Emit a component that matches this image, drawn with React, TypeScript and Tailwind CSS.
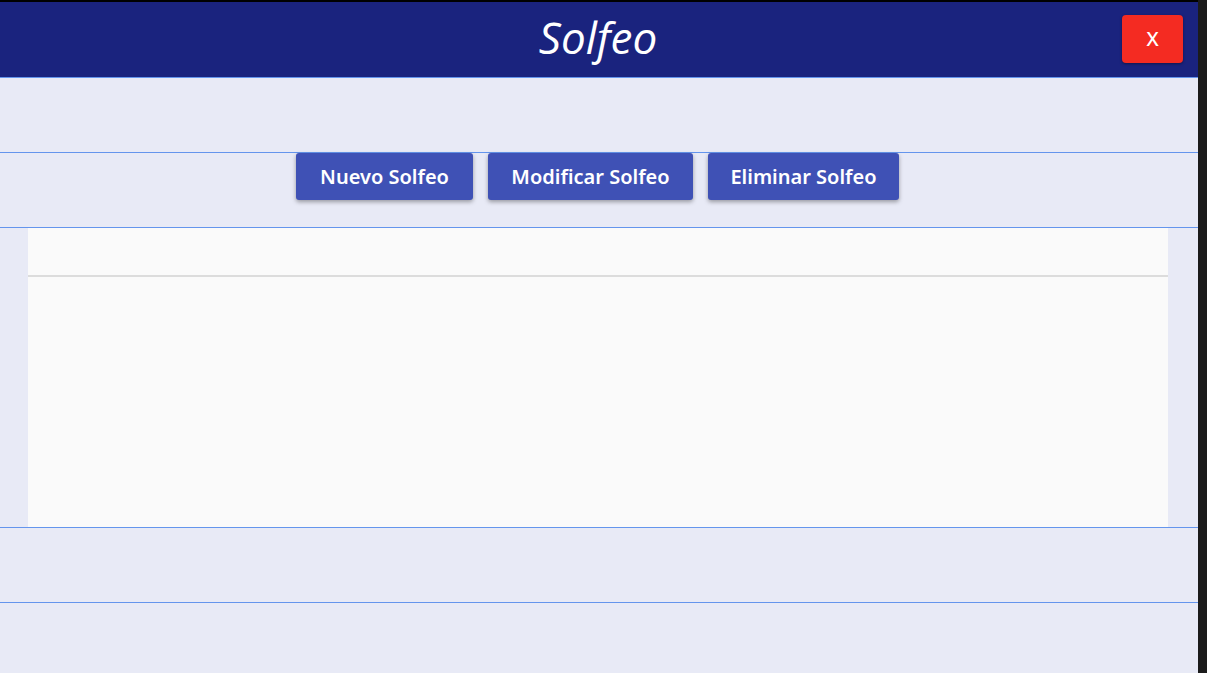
import React from "react";

export default function App() {
  const btn =
    "h-[47px] rounded-[3px] bg-[#3f51b5] text-white text-[20px] font-semibold shadow-[0_2px_4px_rgba(0,0,0,0.35)] flex items-center justify-center";
  return (
    <div
      className="flex w-[1207px] h-[673px] overflow-hidden bg-[#1b1b1b]"
      style={{ fontFamily: '"Noto Sans", "Open Sans", sans-serif' }}
    >
      <div className="flex flex-col w-[1198px] h-full bg-[#e8eaf6] border-t-2 border-black">
        <div className="h-[75px] bg-[#1a237e] relative flex items-center justify-center shrink-0">
          <span className="text-white italic text-[44px] leading-none pb-[6px] pr-[2px]" style={{ fontFamily: '"Open Sans", sans-serif' }}>
            Solfeo
          </span>
          <button className="absolute right-[15px] top-[13px] w-[61px] h-[48px] rounded-[4px] bg-[#f42b22] text-white text-[20px] font-medium shadow-[0_1px_3px_rgba(0,0,0,0.4)] flex items-center justify-center">
            X
          </button>
        </div>
        <div className="h-[75px] border-t border-[#6495ed] shrink-0" />
        <div className="h-[75px] border-t border-[#6495ed] shrink-0 flex justify-center items-start gap-[15px] pr-[3px]">
          <button className={`${btn} w-[177px]`}>Nuevo Solfeo</button>
          <button className={`${btn} w-[205px]`}>Modificar Solfeo</button>
          <button className={`${btn} w-[191px]`}>Eliminar Solfeo</button>
        </div>
        <div className="h-[300px] border-t border-[#6495ed] shrink-0 px-[28px] pr-[30px] flex">
          <div className="flex-1 bg-[#fafafa] flex flex-col">
            <div className="h-[49px] border-b-2 border-[#dcdcdc]" />
            <div className="flex-1" />
          </div>
        </div>
        <div className="h-[75px] border-t border-[#6495ed] shrink-0" />
        <div className="flex-1 border-t border-[#6495ed]" />
      </div>
    </div>
  );
}
